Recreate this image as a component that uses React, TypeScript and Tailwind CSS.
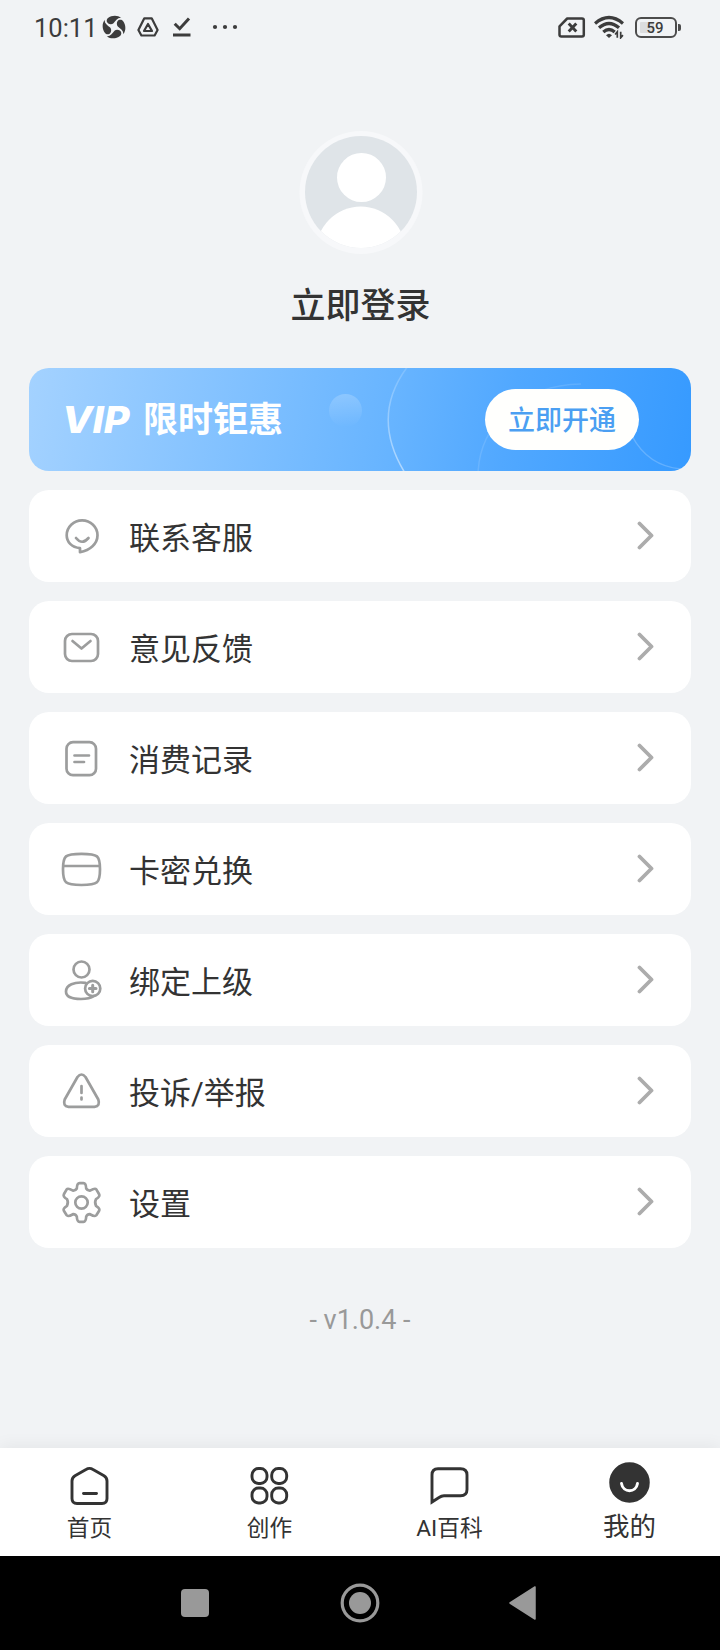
import type { ReactNode } from 'react';

function StatusBar() {
  return (
    <div className="flex h-[54px] items-center pl-[34px] pr-[39px] text-[#3c3c3c]">
      <span className="w-[63px] whitespace-nowrap pt-[2px] font-[Roboto] text-[25.5px] leading-[56px]">10:11</span>
      <svg className="ml-[5px] h-6 w-6 shrink-0" viewBox="0 0 24 24" fill="currentColor">
        <path d="M6 3C9.500 .1 15.500 -.3 19.200 2.800C16 2.200 14 5 11.500 8.200C9.600 10 5.400 9.200 4.800 6.600C4.500 5 5 3.800 6 3Z" />
        <path d="M21 6C23.900 9.500 24.300 15.500 21.200 19.200C21.800 16 19 14 15.800 11.500C14 9.600 14.800 5.400 17.400 4.800C19 4.500 20.200 5 21 6Z" />
        <path d="M18 21C14.500 23.900 8.500 24.300 4.800 21.200C8 21.800 10 19 12.500 15.800C14.400 14 18.600 14.800 19.200 17.400C19.500 19 19 20.200 18 21Z" />
        <path d="M3 18C.1 14.500 -.3 8.500 2.800 4.800C2.200 8 5 10 8.200 12.500C10 14.400 9.200 18.600 6.600 19.200C5 19.500 3.800 19 3 18Z" />
      </svg>
      <svg className="ml-[11px] h-6 w-[22px] shrink-0" viewBox="0 0 22 24" fill="none" stroke="currentColor" strokeWidth="2.200" strokeLinejoin="round">
        <path d="M7.300 3.300h7.400L20.600 15l-3 5.500H4.400L1.400 15Z" />
        <path d="M11 9l4 7H7Z" />
      </svg>
      <svg className="ml-[14px] h-6 w-[18px] shrink-0" viewBox="0 0 18 24" fill="none" stroke="currentColor" strokeWidth="3">
        <path d="M1.700 8.700l5 5L16 3.500M0 20h17.500" />
      </svg>
      <svg className="ml-[21px] h-6 w-[26px] shrink-0" viewBox="0 0 26 24" fill="currentColor">
        <circle cx="3" cy="12" r="2.100" />
        <circle cx="13" cy="12" r="2.100" />
        <circle cx="23" cy="12" r="2.100" />
      </svg>

      <svg className="ml-auto h-6 w-7 shrink-0" viewBox="0 0 28 24" fill="none" stroke="currentColor" strokeWidth="2.500" strokeLinejoin="round">
        <path d="M9.200 3.500H24Q25.800 3.500 25.800 5.300V19.800Q25.800 21.500 24 21.500H3.300Q1.500 21.500 1.500 19.800V11.300Z" />
        <path d="M10.700 8.500l7.600 8M18.300 8.500l-7.600 8" strokeWidth="2.900" />
      </svg>
      <svg className="ml-2 h-6 w-[30px] shrink-0" viewBox="0 0 30 24" fill="none" stroke="currentColor" strokeWidth="3.300">
        <path d="M1 8.500Q15 -3.500 29 8.500" />
        <path d="M5 12.800Q15 4.300 25 12.800" />
        <path d="M9.300 17Q15 12.100 20.700 17" />
        <path d="M12 20.200Q15 17.200 18 20.200L15 23Z" fill="currentColor" stroke="none" />
        <path d="M23.300 22.800v-6l-2.200 2.700M26.700 16.800v6l2.200-2.700" strokeWidth="1.700" />
      </svg>
      <div className="ml-[11px] flex items-center">
        <div className="flex h-[21px] w-[42px] items-center justify-center rounded-[6px] border-2 border-[#4c4c4c] bg-linear-to-r from-[#dcddde] from-45% to-transparent to-45% bg-clip-content p-[3px] font-[Roboto] text-[15px] font-medium leading-none">
          <span className="-ml-[2px] mt-[2px]">59</span>
        </div>
        <div className="ml-px h-[7px] w-[3px] rounded-r-xs bg-[#4c4c4c]" />
      </div>
    </div>
  );
}

function Avatar() {
  return (
    <svg className="ml-px h-[124px] w-[124px]" viewBox="0 0 124 124">
      <defs>
        <clipPath id="face">
          <circle cx="62" cy="61" r="56" />
        </clipPath>
      </defs>
      <circle cx="62" cy="61.500" r="61.500" fill="#f7f8fa" />
      <circle cx="62" cy="61" r="56" fill="#dfe4e8" />
      <g clipPath="url(#face)" fill="#fff">
        <circle cx="62.500" cy="46.500" r="24.500" />
        <ellipse cx="61.700" cy="121.500" rx="45" ry="46" />
      </g>
    </svg>
  );
}

function VipBanner() {
  return (
    <div className="relative flex h-[103px] items-center justify-between overflow-hidden rounded-[20px] bg-[linear-gradient(100deg,#a4d2ff_0%,#67b4ff_55%,#51a8ff_72%,#369aff_100%)] pl-[34px] pr-[52px]">
      <svg className="absolute inset-0 h-full w-full" viewBox="0 0 662 103" fill="none">
        <defs>
          <linearGradient id="bubble" x1="0" y1="0" x2="0" y2="1">
            <stop offset="0" stopColor="#fff" stopOpacity=".2" />
            <stop offset="1" stopColor="#fff" stopOpacity="0" />
          </linearGradient>
          <linearGradient id="arc" x1="0" y1="0" x2="0" y2="1">
            <stop offset="0" stopColor="#fff" stopOpacity=".15" />
            <stop offset="1" stopColor="#fff" stopOpacity=".5" />
          </linearGradient>
        </defs>
        <circle cx="316.500" cy="42.500" r="16.500" fill="url(#bubble)" />
        <path d="M379 -2Q341 48 376 105" stroke="url(#arc)" strokeWidth="1.500" />
        <path d="M449 105C451 58 490 17 552 16" stroke="#fff" strokeOpacity=".12" strokeWidth="1.500" />
        <path d="M603 68Q619 98 652 101" stroke="#fff" strokeOpacity=".2" strokeWidth="1.500" />
      </svg>
      <div className="relative flex items-center text-white">
        <span className="-ml-px mb-px w-[81px] origin-left scale-x-[1.07] whitespace-nowrap font-[Inter] text-[37px] font-extrabold italic leading-none">VIP</span>
        <span className="mt-px whitespace-nowrap text-[35px] font-bold leading-none">限时钜惠</span>
      </div>
      <button className="relative h-[61px] w-[154px] rounded-full bg-[#fffffd] pt-[4px] text-[27px] font-medium leading-none text-[#4b9ff2]">
        立即开通
      </button>
    </div>
  );
}

const menu: { label: string; icon: ReactNode }[] = [
  {
    label: '联系客服',
    icon: (
      <>
        <path d="M19 36.200v-4C10.500 31.200 5.700 26 5.700 19.300A15.200 14.700 0 0 1 36.500 19.300C36.500 28 29 34.200 19 36.200Z" />
        <path d="M15 22q6 7.500 12.500 0" />
      </>
    ),
  },
  {
    label: '意见反馈',
    icon: (
      <>
        <rect x="4" y="7" width="33" height="27" rx="7" />
        <path d="M11.500 14L20.500 21.500L29.500 14" />
      </>
    ),
  },
  {
    label: '消费记录',
    icon: (
      <>
        <rect x="5.500" y="4.200" width="29.500" height="33" rx="6.500" />
        <path d="M13.500 17.500H28M13.500 24h9.500" />
      </>
    ),
  },
  {
    label: '卡密兑换',
    icon: (
      <>
        <path d="M2 20.300C2 6.500 4 4.800 20.500 4.800S39 6.500 39 20.300S37 36 20.500 36S2 34 2 20.300Z" />
        <path d="M3 17H38" />
      </>
    ),
  },
  {
    label: '绑定上级',
    icon: (
      <>
        <circle cx="20.500" cy="9.500" r="8" />
        <path d="M24.500 22.800C13 21.500 5 25 5 31.500S12 39 20 39C26 39 30 38 33 36" />
        <circle cx="31.700" cy="28.500" r="7.600" />
        <path d="M31.700 25.200v6.600M28.400 28.500h6.600" strokeWidth="3" />
      </>
    ),
  },
  {
    label: '投诉/举报',
    icon: (
      <>
        <path d="M16.500 6Q20.500 1 24.500 6L37.300 28.500Q39.500 35 33.500 35.800H7.500Q1.500 35 3.700 28.500Z" />
        <path d="M20.500 15v7M20.500 26.500v2" />
      </>
    ),
  },
  {
    label: '设置',
    icon: (
      <>
        <path d="M15.800 6.500Q16 1.200 18.500 1.200H22.500Q25 1.200 25.200 6.500Q26.500 8.800 29 8.600Q34 5.800 35.300 7.300L38 12Q39.500 14.500 35 17.200Q33.300 20.300 35 23.800Q39.500 26.500 38 29L35.300 33.300Q34 35 29 32.200Q26.500 32 25.200 34.500Q25 39.800 22.500 39.800H18.500Q16 39.800 15.800 34.500Q14.500 32 12 32.200Q7 35 5.700 33.300L3 29Q1.500 26.500 6 23.800Q7.700 20.300 6 17.200Q1.500 14.500 3 12L5.700 7.300Q7 5.800 12 8.600Q14.500 8.800 15.800 6.500Z" />
        <circle cx="20.500" cy="20.500" r="6.200" />
      </>
    ),
  },
];

function MenuRow({ label, icon }: { label: string; icon: ReactNode }) {
  return (
    <div className="flex h-[92px] items-center rounded-[20px] bg-white pl-[31.5px] pr-[37px]">
      <svg className="h-[41px] w-[41px] shrink-0 overflow-visible" viewBox="0 0 41 41" fill="none" stroke="#9c9d9d" strokeWidth="2.700" strokeLinecap="round" strokeLinejoin="round">
        {icon}
      </svg>
      <span className="ml-[27.5px] mt-[5px] flex-1 text-[31px] leading-none text-[#333]">{label}</span>
      <svg className="mb-px h-[29px] w-[17px]" viewBox="0 0 17 29" fill="none" stroke="#acacac" strokeWidth="3.800" strokeLinecap="round" strokeLinejoin="round">
        <path d="M2.500 2.500L14.500 14.500L2.500 26.500" />
      </svg>
    </div>
  );
}

const tabs: { label: string; active?: boolean; icon: ReactNode }[] = [
  {
    label: '首页',
    icon: (
      <>
        <path d="M17 3.500Q20.500 1.200 24 3.500L35 9.700Q38 11.500 38 15V32.500Q38 37.500 33 37.500H8Q3 37.500 3 32.500V15Q3 11.500 6 9.700Z" />
        <path d="M14.500 27.500H27.500" />
      </>
    ),
  },
  {
    label: '创作',
    icon: (
      <>
        <rect x="3" y="2.500" width="15" height="15" rx="6.500" />
        <rect x="22.700" y="2.500" width="15" height="15" rx="6.500" />
        <rect x="3" y="22" width="15" height="15" rx="6.500" />
        <rect x="22.700" y="22" width="15" height="15" rx="6.500" />
      </>
    ),
  },
  {
    label: 'AI百科',
    icon: <path strokeLinejoin="miter" d="M3 36V9Q3 2.800 9 2.800H31.500Q38 2.800 38 9V23.500Q38 29.700 31.500 29.700H15Q12.500 29.700 10 31.500Z" />,
  },
  {
    label: '我的',
    active: true,
    icon: (
      <>
        <circle cx="20.500" cy="20.500" r="18.800" fill="#333" />
        <path d="M12.500 21.500C14 31.200 27 31.200 28.500 21.500" stroke="#fff" />
      </>
    ),
  },
];

function TabBar() {
  return (
    <div className="grid h-[108px] grid-cols-4 bg-white text-[#333] shadow-[0_-2px_16px_rgba(0,0,0,0.06)]">
      {tabs.map((tab) => (
        <div key={tab.label} className={tab.active ? 'flex flex-col items-center pr-px pt-[14px]' : 'flex flex-col items-center pr-px pt-[18px]'}>
          <svg className="h-[41px] w-[41px] shrink-0" viewBox="0 0 41 41" fill="none" stroke="#333" strokeWidth="2.900" strokeLinecap="round" strokeLinejoin="round">
            {tab.icon}
          </svg>
          <span className={tab.active ? 'mt-[11px] text-[26.5px] leading-none' : 'mt-[11px] text-[22.7px] leading-none'}>
            {tab.label}
          </span>
        </div>
      ))}
    </div>
  );
}

function SystemNav() {
  return (
    <div className="flex h-[94px] items-center justify-center bg-black pr-[3px]">
      <div className="h-7 w-7 rounded-[4px] bg-[#999]" />
      <svg className="ml-[131px] h-10 w-10" viewBox="0 0 40 40" fill="none">
        <circle cx="20" cy="20" r="17.800" stroke="#999" strokeWidth="3.200" />
        <circle cx="20" cy="20" r="11" fill="#999" />
      </svg>
      <svg className="ml-[129px] h-[34px] w-[27px]" viewBox="0 0 27 34">
        <path d="M1 17L26 1V33Z" fill="#999" stroke="#999" strokeWidth="1.500" strokeLinejoin="round" />
      </svg>
    </div>
  );
}

export default function App() {
  return (
    <div className="flex h-[1650px] w-[720px] flex-col overflow-hidden bg-[#f1f3f5] font-[Roboto,'Noto_Sans_CJK_SC',sans-serif]">
      <StatusBar />
      <div className="flex flex-1 flex-col px-[29px]">
        <div className="flex h-[314px] flex-col items-center pt-[77px]">
          <Avatar />
          <div className="ml-px mt-[34px] text-[35px] font-medium leading-none text-[#333]">立即登录</div>
        </div>
        <VipBanner />
        <div className="mt-[19px] flex flex-col gap-[19px]">
          {menu.map((item) => (
            <MenuRow key={item.label} label={item.label} icon={item.icon} />
          ))}
        </div>
        <div className="mt-[59px] text-center text-[27px] leading-none text-[#999]">- v1.0.4 -</div>
      </div>
      <TabBar />
      <SystemNav />
    </div>
  );
}
